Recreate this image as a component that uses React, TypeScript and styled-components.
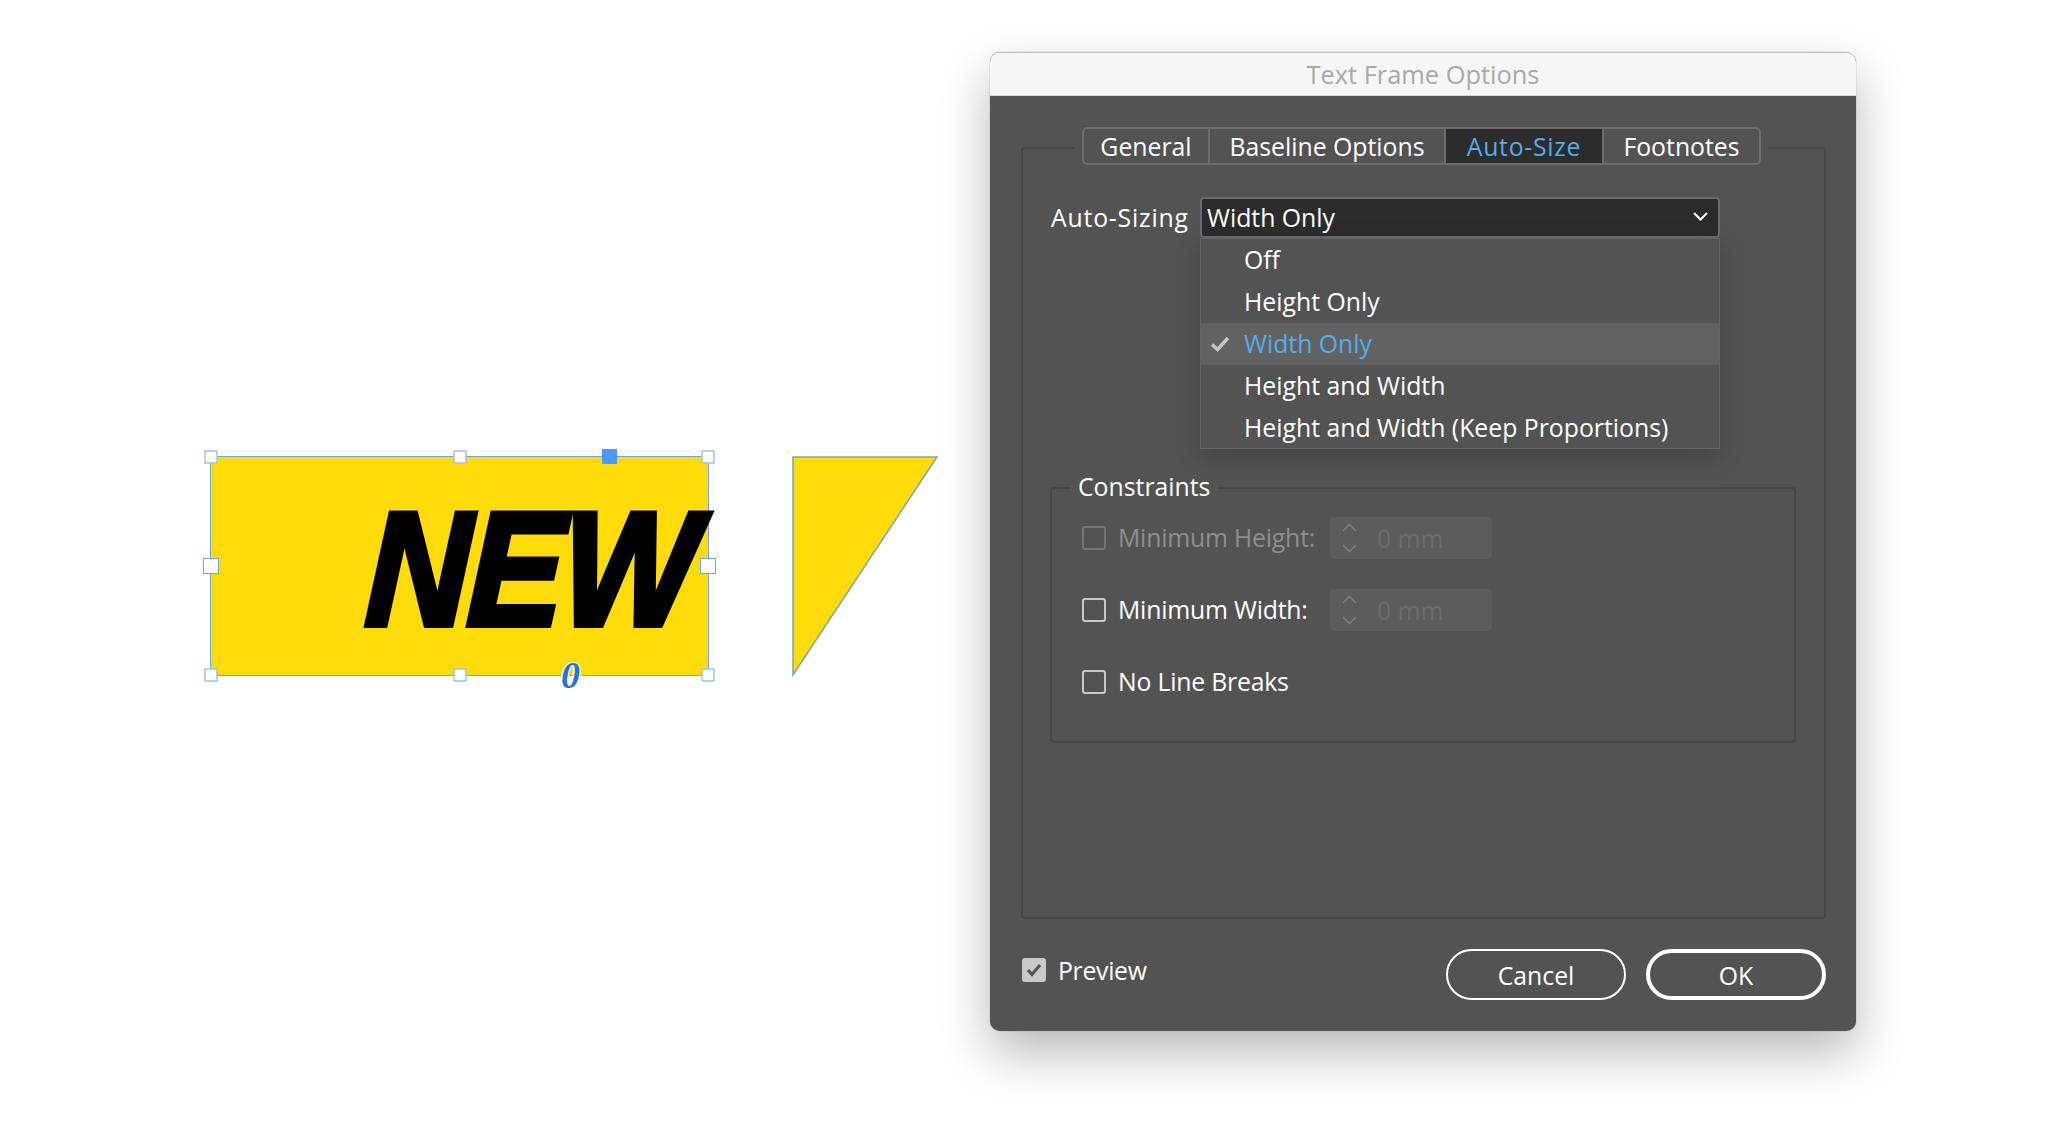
import styled, { createGlobalStyle } from 'styled-components'

const GlobalStyle = createGlobalStyle`
  html, body {
    margin: 0;
    padding: 0;
    background: #fff;
  }
  body {
    font-family: "Open Sans", "Noto Sans", sans-serif;
    font-size: 24.8px;
    color: #fff;
  }
`

const menuItems = ['Off', 'Height Only', 'Width Only', 'Height and Width', 'Height and Width (Keep Proportions)']

const handles = [
  { x: 0, y: 0 },
  { x: 50, y: 0 },
  { x: 100, y: 0 },
  { x: 0, y: 50, big: true },
  { x: 100, y: 50, big: true },
  { x: 0, y: 100 },
  { x: 50, y: 100 },
  { x: 100, y: 100 },
]

const App = () => {
  return (
    <Page>
      <GlobalStyle />
      <Artwork>
        <Frame>
          <NewText>NEW</NewText>
          {handles.map(h => (
            <Handle key={`${h.x}-${h.y}`} $x={h.x} $y={h.y} $big={!!h.big} />
          ))}
          <Port />
          <Overset>0</Overset>
        </Frame>
        <svg width="147" height="221" viewBox="0 0 147 221">
          <polygon points="1,1 145,1 1,219" fill="#ffdb0a" stroke="#7fa3b5" strokeWidth="1.5" />
        </svg>
      </Artwork>

      <Dialog>
        <TitleBar>Text Frame Options</TitleBar>
        <Body>
          <Panel>
            <Tabs>
              <Tab $width={126}>General</Tab>
              <Tab $width={236}>Baseline Options</Tab>
              <Tab $width={158} $active>Auto-Size</Tab>
              <Tab $width={155}>Footnotes</Tab>
            </Tabs>

            <SizingRow>
              <SizingLabel>Auto-Sizing</SizingLabel>
              <Select>
                Width Only
                <svg width="17" height="11" viewBox="0 0 17 11" fill="none" stroke="#fff" strokeWidth="2">
                  <path d="M2 2l6.5 6.5L15 2" />
                </svg>
              </Select>
              <Menu>
                {menuItems.map(item => (
                  <MenuItem key={item} $selected={item === 'Width Only'}>
                    {item === 'Width Only' && (
                      <MenuCheck width="20" height="16" viewBox="0 0 20 16" fill="none" stroke="#c4c4c4" strokeWidth="3.5">
                        <path d="M2 8.5l5.5 5L18 2" />
                      </MenuCheck>
                    )}
                    {item}
                  </MenuItem>
                ))}
              </Menu>
            </SizingRow>

            <Group>
              <Legend>Constraints</Legend>
              <Row>
                <Checkbox $disabled />
                <RowLabel $disabled>Minimum Height:</RowLabel>
                <NumberField>
                  <Spinner />
                  0 mm
                </NumberField>
              </Row>
              <Row>
                <Checkbox />
                <RowLabel>Minimum Width:</RowLabel>
                <NumberField>
                  <Spinner />
                  0 mm
                </NumberField>
              </Row>
              <Row>
                <Checkbox />
                <RowLabel>No Line Breaks</RowLabel>
              </Row>
            </Group>
          </Panel>

          <Footer>
            <PreviewBox>
              <svg width="16" height="14" viewBox="0 0 16 14" fill="none" stroke="#535353" strokeWidth="3">
                <path d="M2 7l4 4.5L14 2" />
              </svg>
            </PreviewBox>
            <PreviewLabel>Preview</PreviewLabel>
            <Button>Cancel</Button>
            <Button $primary>OK</Button>
          </Footer>
        </Body>
      </Dialog>
    </Page>
  )
}

const Spinner = () => (
  <SpinnerIcon width="17" height="30" viewBox="0 0 17 30" fill="none" stroke="#7c7c7c" strokeWidth="1.6">
    <path d="M2 8l6.5-6.5L15 8" />
    <path d="M2 22l6.5 6.5L15 22" />
  </SpinnerIcon>
)

const Page = styled.div`
  width: 2048px;
  height: 1124px;
  overflow: hidden;
  box-sizing: border-box;
  padding: 52px 192px 0 210px;
  display: flex;
  justify-content: space-between;
  align-items: flex-start;
`

const Artwork = styled.div`
  display: flex;
  gap: 83px;
  margin-top: 404px;
`

const Frame = styled.div`
  position: relative;
  width: 499px;
  height: 220px;
  box-sizing: border-box;
  border: 1.5px solid #6fa5d8;
  background: #ffdb0a;
  display: flex;
  justify-content: flex-end;
  align-items: center;
  padding-top: 6px;
`

const NewText = styled.span`
  margin-right: 12px;
  font-family: "Liberation Sans", Arial, sans-serif;
  font-size: 162px;
  line-height: 1;
  font-weight: 700;
  font-style: italic;
  letter-spacing: -2px;
  color: #000;
  -webkit-text-stroke: 6px #000;
  transform: scaleX(0.885) skewX(-3deg);
  transform-origin: right center;
`

const Handle = styled.div<{ $x: number; $y: number; $big: boolean }>`
  position: absolute;
  left: ${props => props.$x}%;
  top: ${props => props.$y}%;
  width: ${props => props.$big ? 16 : 13}px;
  height: ${props => props.$big ? 16 : 13}px;
  box-sizing: border-box;
  transform: translate(-50%, -50%);
  background: #fff;
  border: 1.5px solid #6fa5d8;
`

const Port = styled.div`
  position: absolute;
  left: 391px;
  top: -8px;
  width: 15px;
  height: 15px;
  background: #4c9aff;
`

const Overset = styled.span`
  position: absolute;
  left: 350px;
  top: 199px;
  font-family: "Liberation Serif", serif;
  font-size: 38px;
  line-height: 1;
  font-style: italic;
  font-weight: 700;
  color: #2274d8;
  text-shadow: 1.5px 0 0 #fff, -1.5px 0 0 #fff, 0 1.5px 0 #fff, 0 -1.5px 0 #fff;
`

const Dialog = styled.div`
  width: 866px;
  height: 979px;
  border-radius: 10px;
  background: #535353;
  overflow: hidden;
  box-shadow: 0 22px 50px rgba(0, 0, 0, 0.28), 0 0 1px rgba(0, 0, 0, 0.5);
  display: flex;
  flex-direction: column;
`

const TitleBar = styled.div`
  height: 44px;
  flex-shrink: 0;
  box-sizing: border-box;
  background: #f6f6f6;
  border-top: 1px solid #bdbdbd;
  border-bottom: 1px solid #d4d4d4;
  color: #a9a9a9;
  display: flex;
  align-items: center;
  justify-content: center;
  font-size: 25.4px;
`

const Body = styled.div`
  flex: 1;
  padding: 51px 30px 0 31px;
`

const Panel = styled.div`
  width: 805px;
  height: 772px;
  box-sizing: border-box;
  border: 2px solid #484848;
  border-radius: 4px;
`

const Tabs = styled.div`
  width: fit-content;
  margin: -22px 0 0 59px;
  display: flex;
  height: 38px;
  box-sizing: border-box;
  border: 2px solid #6c6c6c;
  border-radius: 5px;
  overflow: hidden;
  outline: 7px solid #535353;
  background: #535353;
`

const Tab = styled.div<{ $width: number; $active?: boolean }>`
  width: ${props => props.$width}px;
  box-sizing: border-box;
  display: flex;
  align-items: center;
  justify-content: center;
  background: ${props => props.$active ? '#2c2c2c' : 'transparent'};
  color: ${props => props.$active ? '#53ade9' : '#fff'};
  letter-spacing: ${props => props.$active ? 0.7 : 0}px;
  border-right: 2px solid #6c6c6c;

  &:last-child {
    border-right: 0;
  }
`

const SizingRow = styled.div`
  position: relative;
  display: flex;
  align-items: center;
  margin: 32px 0 0 28px;
`

const SizingLabel = styled.div`
  width: 149px;
  padding-bottom: 2px;
  letter-spacing: 0.8px;
`

const Select = styled.div`
  width: 520px;
  height: 41px;
  box-sizing: border-box;
  border: 2px solid #6a6a6a;
  border-radius: 4px;
  background: #2c2c2c;
  padding: 0 9px 2px 5px;
  display: flex;
  align-items: center;
  justify-content: space-between;
`

const Menu = styled.div`
  position: absolute;
  top: 41px;
  left: 149px;
  width: 520px;
  height: 211px;
  box-sizing: border-box;
  background: #535353;
  border: 1px solid #656565;
  box-shadow: 0 8px 24px rgba(0, 0, 0, 0.18);
  z-index: 2;
`

const MenuItem = styled.div<{ $selected: boolean }>`
  position: relative;
  height: 42px;
  box-sizing: border-box;
  display: flex;
  align-items: center;
  padding: 0 0 2px 43px;
  background: ${props => props.$selected ? '#626262' : 'transparent'};
  color: ${props => props.$selected ? '#53ade9' : '#fff'};
`

const MenuCheck = styled.svg`
  position: absolute;
  left: 9px;
  top: 13px;
`

const Group = styled.div`
  width: 746px;
  height: 256px;
  box-sizing: border-box;
  margin: 249px 0 0 27px;
  padding: 0 30px;
  border: 2px solid #484848;
  border-radius: 4px;
  display: flex;
  flex-direction: column;
  gap: 30px;
`

const Legend = styled.div`
  width: fit-content;
  height: 30px;
  line-height: 30px;
  margin: -18px 0 -14px -12px;
  padding: 0 8px;
  background: #535353;
`

const Row = styled.div`
  height: 42px;
  display: flex;
  align-items: center;
`

const Checkbox = styled.div<{ $disabled?: boolean }>`
  width: 24px;
  height: 24px;
  box-sizing: border-box;
  flex-shrink: 0;
  border: 2px solid ${props => props.$disabled ? '#757575' : '#c8c8c8'};
  border-radius: 3px;
`

const RowLabel = styled.div<{ $disabled?: boolean }>`
  width: 212px;
  flex-shrink: 0;
  margin-left: 12px;
  padding-bottom: 2px;
  white-space: nowrap;
  letter-spacing: -0.2px;
  color: ${props => props.$disabled ? '#8e8e8e' : '#fff'};
`

const NumberField = styled.div`
  width: 162px;
  height: 42px;
  box-sizing: border-box;
  padding-left: 11px;
  border-radius: 4px;
  background: #5c5c5c;
  color: #6c6c6c;
  display: flex;
  align-items: center;
  gap: 19px;
`

const SpinnerIcon = styled.svg`
  flex-shrink: 0;
`

const Footer = styled.div`
  margin-top: 30px;
  display: flex;
  align-items: center;
`

const PreviewBox = styled.div`
  width: 24px;
  height: 24px;
  margin: 0 0 10px 1px;
  border-radius: 3px;
  background: #c9c9c9;
  display: flex;
  align-items: center;
  justify-content: center;
`

const PreviewLabel = styled.div`
  margin: 0 auto 10px 12px;
  letter-spacing: -0.3px;
`

const Button = styled.div<{ $primary?: boolean }>`
  width: 180px;
  height: 51px;
  margin-left: 20px;
  box-sizing: border-box;
  border: ${props => props.$primary ? 4 : 2}px solid #fff;
  border-radius: 26px;
  display: flex;
  align-items: center;
  justify-content: center;
`

export default App
